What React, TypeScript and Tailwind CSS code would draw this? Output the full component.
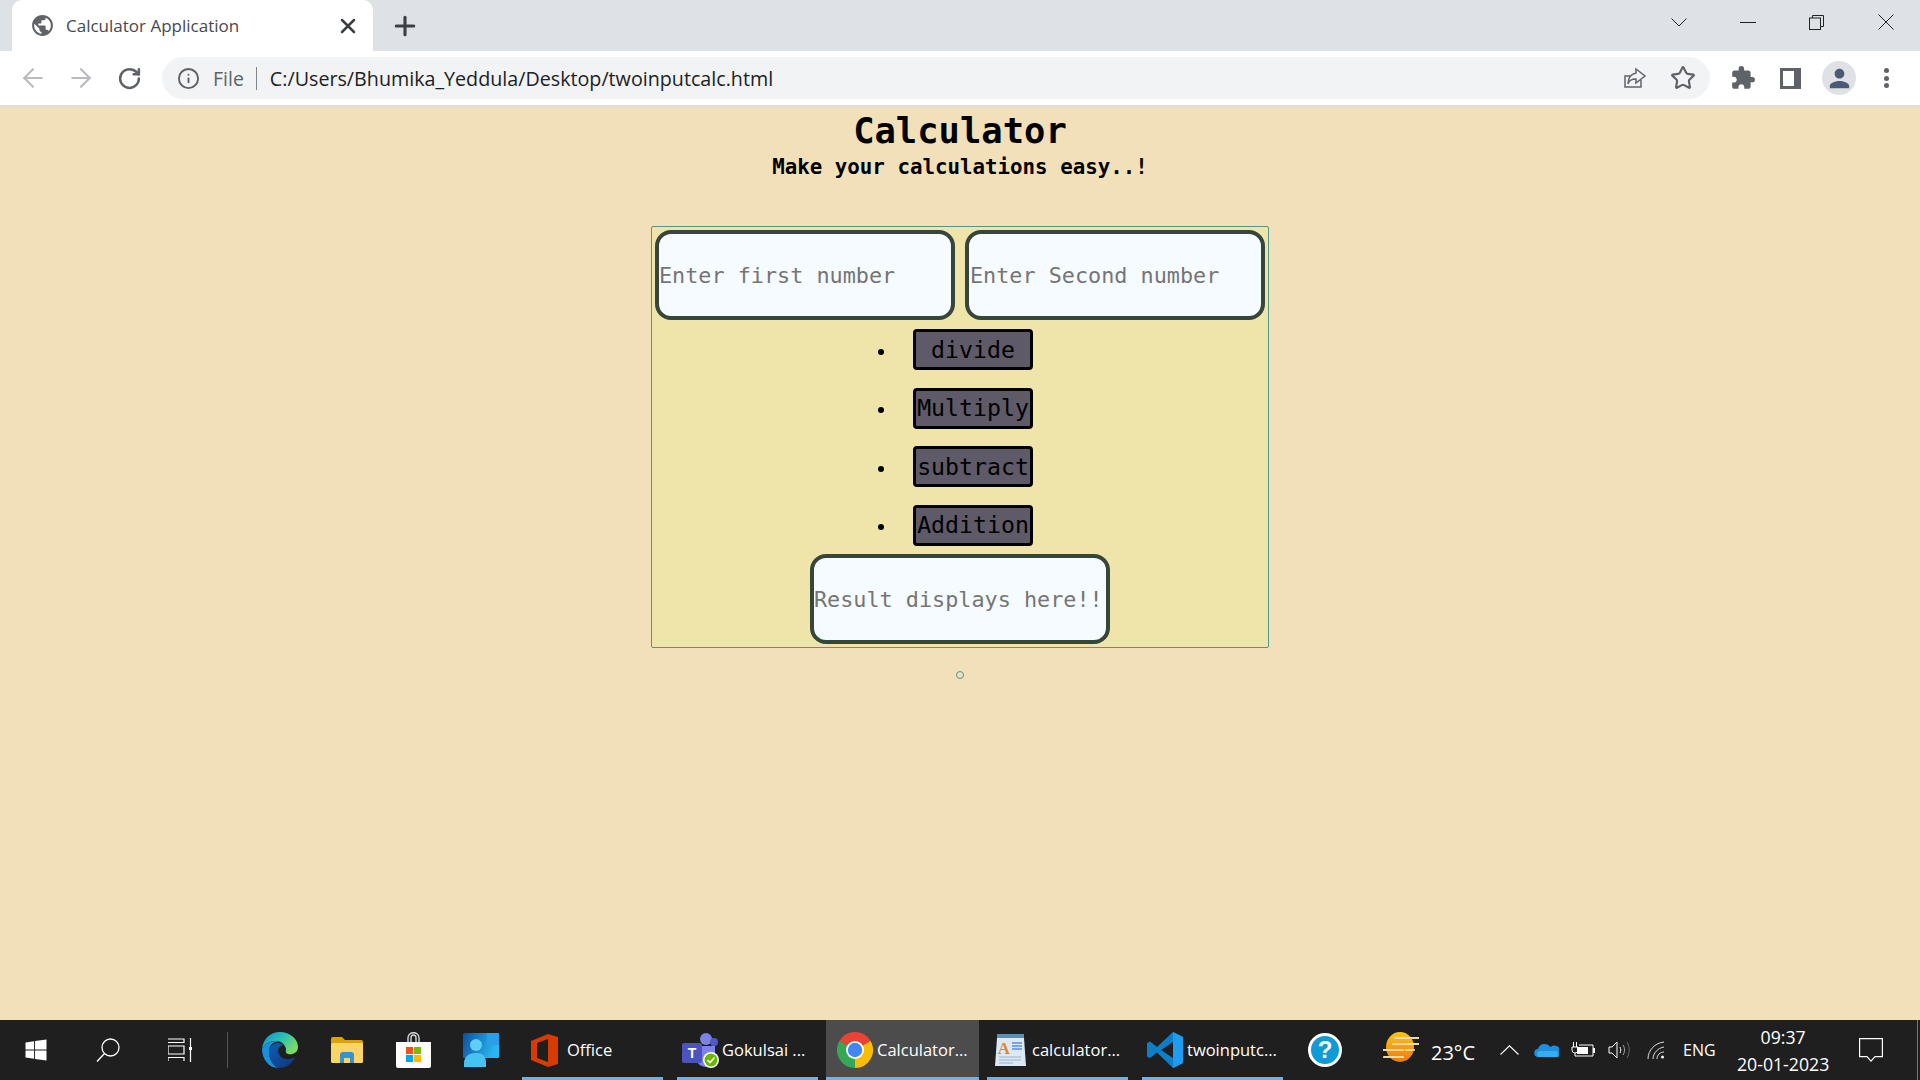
import { ArrowLeft, ArrowRight, RotateCw, Info, Star, Plus, X } from 'lucide-react'
import { FaWindows } from 'react-icons/fa'
import { MdPublic, MdPerson, MdExtension } from 'react-icons/md'

const mono = { fontFamily: '"DejaVu Sans Mono", monospace' }
const ui = { fontFamily: '"Open Sans", "Noto Sans", sans-serif' }

function Edge() {
  return (
    <svg viewBox="0 0 36 36" className="w-[36px] h-[36px]">
      <defs>
        <linearGradient id="edgeTop" x1="0" y1="0" x2="1" y2="0.6">
          <stop offset="0" stopColor="#0c8ccf" />
          <stop offset="0.55" stopColor="#2fc1b0" />
          <stop offset="1" stopColor="#7fdc62" />
        </linearGradient>
        <linearGradient id="edgeLow" x1="0" y1="0" x2="1" y2="1">
          <stop offset="0" stopColor="#0b5fb0" />
          <stop offset="1" stopColor="#13347d" />
        </linearGradient>
      </defs>
      <path d="M0 17C1 7 8 0 18 0c10 0 18 7 18 15 0 6-6 8-10 7-3-1-2-3-2-5-1-5-5-8-10-8-6 0-12 3-14 8z" fill="url(#edgeTop)" />
      <path d="M0 17c2-5 8-8 14-8 1 0 2 .2 3 .5-6 0-10 4-10 10 0 7 4 14 9 16.500C7 36 0 27 0 17z" fill="#1a8fdc" />
      <path d="M16 36c-5-2-9-9-9-16 0-5 4-9 9-9 3 0 5 1 5 2-4 1-6 5-4 9 2 5 9 7 16 3-3 7-9 11-17 11z" fill="url(#edgeLow)" />
    </svg>
  )
}

function Explorer() {
  return (
    <svg viewBox="0 0 32 26" className="w-[32px] h-[26px]">
      <path d="M0 2a2 2 0 0 1 2-2h9l3 3h16a2 2 0 0 1 2 2v3H0z" fill="#dca10c" />
      <rect x="0" y="6" width="32" height="20" rx="1.500" fill="#fbd667" />
      <path d="M9 26v-8a3 3 0 0 1 3-3h8a3 3 0 0 1 3 3v8h-4v-5h-6v5z" fill="#3d8fd0" />
    </svg>
  )
}

function Store() {
  return (
    <svg viewBox="0 0 35 36" className="w-[35px] h-[36px]">
      <path d="M12 11V6c0-7 11-7 11 0v5M15 11V6c0-4 5-4 5 0v5" fill="none" stroke="#d8d8d8" strokeWidth="1.400" />
      <path d="M0 10h35v24a2 2 0 0 1-2 2H2a2 2 0 0 1-2-2z" fill="#fff" />
      <rect x="10" y="15" width="7" height="7" fill="#f1511b" />
      <rect x="18" y="15" width="7" height="7" fill="#80b905" />
      <rect x="10" y="23" width="7" height="7" fill="#01a4ee" />
      <rect x="18" y="23" width="7" height="7" fill="#ffb900" />
    </svg>
  )
}

function People() {
  return (
    <svg viewBox="0 0 36 34" className="w-[36px] h-[34px]">
      <defs>
        <linearGradient id="peopleBox" x1="0" y1="0" x2="1" y2="0.3">
          <stop offset="0" stopColor="#0d4f9c" />
          <stop offset="1" stopColor="#29b6f2" />
        </linearGradient>
      </defs>
      <rect x="0" y="0" width="36" height="25" rx="1.500" fill="url(#peopleBox)" />
      <rect x="24" y="0" width="12" height="12" fill="#2a9fe8" />
      <circle cx="13" cy="12" r="6" fill="#5fd0f5" />
      <path d="M1 34v-4c0-6 5-10 11-10h2c6 0 9 4 9 10v4z" fill="#47c3f2" />
    </svg>
  )
}

function Office() {
  return (
    <svg viewBox="0 0 27 33" className="w-[27px] h-[33px]">
      <path fillRule="evenodd" d="M0 7L17 0l10 3v27l-10 3L0 26zM17 5L6 9v15l11 4z" fill="#d83b01" />
    </svg>
  )
}

function Teams() {
  return (
    <svg viewBox="0 0 37 35" className="w-[37px] h-[35px]">
      <circle cx="24" cy="6" r="6" fill="#7b83eb" />
      <circle cx="32" cy="9" r="4" fill="#5059c9" />
      <path d="M14 13h19v12c0 6-4 9-9 9s-10-4-10-9z" fill="#7b83eb" />
      <rect x="0" y="10" width="20" height="20" rx="2" fill="#4b53bc" />
      <text x="10" y="25" fontSize="14" fontWeight="700" textAnchor="middle" fill="#fff" fontFamily="Liberation Sans">T</text>
      <circle cx="29" cy="27" r="8" fill="#fff" />
      <circle cx="29" cy="27" r="6.500" fill="#6bb700" />
      <path d="M25.500 27l2.500 2.500 4.500-5" fill="none" stroke="#fff" strokeWidth="1.600" />
    </svg>
  )
}

function Chrome() {
  return (
    <svg viewBox="0 0 36 36" className="w-[36px] h-[36px]">
      <path d="M18 18L2.400 9A18 18 0 0 1 33.600 9z" fill="#ea4335" />
      <path d="M18 18L33.600 9A18 18 0 0 1 18 36z" fill="#fbbc04" />
      <path d="M18 18L18 36A18 18 0 0 1 2.400 9z" fill="#34a853" />
      <circle cx="18" cy="18" r="9" fill="#fff" />
      <circle cx="18" cy="18" r="7.200" fill="#4285f4" />
    </svg>
  )
}

function Notes() {
  return (
    <svg viewBox="0 0 31 33" className="w-[31px] h-[33px]">
      <rect x="2" y="0" width="27" height="5" fill="#5d8db0" />
      <path d="M2 4h27l2 28H0z" fill="#dce9f4" />
      <text x="9" y="20" fontSize="17" fontWeight="700" textAnchor="middle" fill="#e8852a" fontFamily="Liberation Serif">A</text>
      <path d="M17 9h10M17 12h10M17 15h10" stroke="#5b8fd6" strokeWidth="1.500" />
      <path d="M4 23h22M4 26h22M4 29h14" stroke="#9cb2c6" strokeWidth="1.200" />
    </svg>
  )
}

function VsCode() {
  return (
    <svg viewBox="0 0 36 36" className="w-[36px] h-[36px]">
      <path d="M26 0L36 5v26l-10 5-16-15.500-7 5.500-3-1.500V11l3-1.500 7 5.500z" fill="#0c7fcb" />
      <path d="M26 0L36 5v26l-10 5z" fill="#1f9cf0" />
      <path d="M26 10L14 18l12 8z" fill="#1f1f1f" />
    </svg>
  )
}

function Help() {
  return (
    <div className="w-[34px] h-[34px] rounded-full bg-[#0f9bd7] border-[3px] border-white flex items-center justify-center text-white text-[24px] font-bold" style={{ fontFamily: '"Liberation Sans", sans-serif' }}>
      ?
    </div>
  )
}

function Weather() {
  return (
    <svg viewBox="0 0 36 30" className="w-[36px] h-[30px]">
      <defs>
        <linearGradient id="sun" x1="0" y1="0" x2="0" y2="1">
          <stop offset="0" stopColor="#fcc419" />
          <stop offset="1" stopColor="#ee7a0c" />
        </linearGradient>
      </defs>
      <ellipse cx="17" cy="15" rx="14" ry="15" fill="url(#sun)" />
      <path d="M12 6h24M10 12h26M0 18h20M23 18h8M1 25h19" stroke="#ecd9a8" strokeWidth="2.200" strokeLinecap="round" />
    </svg>
  )
}

function TaskText({ children }: { children: React.ReactNode }) {
  return <span className="text-[16.500px] text-white leading-none whitespace-nowrap">{children}</span>
}

function Running({ w, ml, active, children }: { w: string; ml: string; active?: boolean; children: React.ReactNode }) {
  return (
    <div className={`${w} ${ml} ${active ? 'bg-[#4c4c4c]' : ''} h-full pt-[3px] flex items-center border-b-[3px] border-[#6cb2e8] shrink-0`}>
      {children}
    </div>
  )
}

function OpButton({ label }: { label: string }) {
  return (
    <li className="flex items-center gap-[29px]">
      <span className="w-[6px] h-[6px] rounded-full bg-black mt-[4px]" />
      <button className="w-[120px] h-[41px] bg-[#5f5a68] border-[3px] border-black rounded-[4px] text-[23.200px] text-black leading-none p-0 flex items-center justify-center" style={mono}>
        {label}
      </button>
    </li>
  )
}

export default function App() {
  return (
    <div className="w-[1920px] h-[1080px] flex flex-col overflow-hidden" style={ui}>
      {/* tab strip */}
      <div className="h-[51px] bg-[#dee1e6] flex items-end shrink-0">
        <div className="ml-[12px] w-[361px] h-[51px] bg-white rounded-t-[10px] flex items-center pl-[19px] pr-[13px] text-[#45494e]">
          <MdPublic className="w-[25px] h-[25px] text-[#5f6368] -ml-[1px]" />
          <span className="ml-[11px] text-[17px] leading-none">Calculator Application</span>
          <X className="ml-auto w-[24px] h-[24px] text-[#3c4043]" strokeWidth={2.500} />
        </div>
        <div className="ml-[17px] h-[51px] flex items-center">
          <Plus className="w-[30px] h-[30px] text-[#3c4043]" strokeWidth={2.500} />
        </div>
        <div className="ml-auto h-[44px] self-start flex items-center">
          <svg viewBox="0 0 16 9" className="w-[16px] h-[9px] mr-[53px]" fill="none" stroke="#222" strokeWidth="1">
            <path d="M.500.500L8 8l7.500-7.500" />
          </svg>
          <span className="w-[16px] h-[1px] bg-[#222] mr-[53px]" />
          <svg viewBox="0 0 15 15" className="w-[15px] h-[15px] mr-[54px]" fill="none" stroke="#222" strokeWidth="1">
            <rect x="0.500" y="3" width="11" height="11.500" />
            <path d="M3.500 3V0.500h11v11H11.500" />
          </svg>
          <svg viewBox="0 0 16 16" className="w-[16px] h-[16px] mr-[26px]" fill="none" stroke="#222" strokeWidth="1">
            <path d="M.500.500l15 15M15.500.500l-15 15" />
          </svg>
        </div>
      </div>

      {/* toolbar */}
      <div className="h-[56px] bg-white border-b-2 border-[#dfdfdf] flex items-start shrink-0">
        <div className="h-[54px] flex items-center pl-[18px]">
          <ArrowLeft className="w-[30px] h-[30px] text-[#b9bbbe]" strokeWidth={1.700} />
          <ArrowRight className="ml-[18px] w-[30px] h-[30px] text-[#b9bbbe]" strokeWidth={1.700} />
          <RotateCw className="ml-[20.500px] w-[25px] h-[25px] text-[#5f6368]" strokeWidth={2.400} />
        </div>
        <div className="mt-[6px] ml-[20.500px] w-[1548px] h-[42px] rounded-full bg-[#f1f3f4] flex items-center pl-[15px]">
          <Info className="w-[23px] h-[23px] text-[#5f6368]" strokeWidth={2} />
          <span className="ml-[13px] mt-[1px] text-[#5f6368] text-[19.500px] leading-none">File</span>
          <span className="ml-[12px] w-[1px] h-[23px] bg-[#80868b]" />
          <span className="ml-[13px] mt-[1px] text-[#202124] text-[19.700px] leading-none">C:/Users/Bhumika_Yeddula/Desktop/twoinputcalc.html</span>
          <svg viewBox="0 0 24 24" className="ml-auto w-[24px] h-[24px]" fill="none" stroke="#5f6368" strokeWidth="1.500">
            <path d="M18 14v7H2V10h5" />
            <path d="M13 3l9 7-9 7v-4c-4 0-7 1-8 5 0-6 3-10 8-11z" />
          </svg>
          <Star className="ml-[23px] mr-[14px] w-[26px] h-[26px] text-[#5f6368]" strokeWidth={2} />
        </div>
        <div className="h-[54px] flex items-center">
          <MdExtension className="ml-[20px] w-[26px] h-[26px] text-[#5f6368]" />
          <div className="ml-[24px] w-[21px] h-[21px] border-[3px] border-r-[7px] border-[#5f6368] bg-white" />
          <div className="ml-[21px] w-[34px] h-[34px] rounded-full bg-[#dfe1e5] flex items-center justify-center">
            <MdPerson className="w-[29px] h-[29px] text-[#4a5a75]" />
          </div>
          <div className="ml-[28px] flex flex-col gap-[2.500px]">
            <span className="w-[5px] h-[5px] rounded-full bg-[#5f6368]" />
            <span className="w-[5px] h-[5px] rounded-full bg-[#5f6368]" />
            <span className="w-[5px] h-[5px] rounded-full bg-[#5f6368]" />
          </div>
        </div>
      </div>

      {/* page */}
      <main className="flex-1 bg-[#f2e0ba] flex flex-col items-center" style={mono}>
        <h1 className="mt-[4px] text-[35.500px] leading-[40px] font-bold text-black">Calculator</h1>
        <p className="mt-[4px] text-[20.800px] leading-[24px] font-bold text-black">Make your calculations easy..!</p>

        <div className="mt-[47px] w-[618px] h-[422px] bg-[#efe4a9] border border-[#4f9a86] rounded-[2px] p-[3px] flex flex-col">
          <div className="flex gap-[10px]">
            <input placeholder="Enter first number" className="w-[300px] h-[90px] bg-[#f5fbff] border-4 border-[#36463a] rounded-[16px] text-[21.800px] pl-0 outline-none placeholder:text-[#757575]" style={mono} />
            <input placeholder="Enter Second number" className="w-[300px] h-[90px] bg-[#f5fbff] border-4 border-[#36463a] rounded-[16px] text-[21.800px] pl-[1px] outline-none placeholder:text-[#757575]" style={mono} />
          </div>
          <ul className="mt-[9px] pl-[223px] flex flex-col gap-[17.500px]">
            <OpButton label="divide" />
            <OpButton label="Multiply" />
            <OpButton label="subtract" />
            <OpButton label="Addition" />
          </ul>
          <input placeholder="Result displays here!!" className="mt-[8.500px] self-center w-[300px] h-[90px] bg-[#f5fbff] border-4 border-[#36463a] rounded-[16px] text-[21.800px] pl-0 outline-none placeholder:text-[#757575]" style={mono} />
        </div>

        <span className="mt-[23px] w-[8px] h-[8px] rounded-full border-[1.500px] border-[#4f9a86]" />
      </main>

      {/* taskbar */}
      <footer className="h-[60px] bg-[#1f1f1f] flex items-center shrink-0 text-white">
        <FaWindows className="ml-[24px] w-[24px] h-[24px] text-white shrink-0" />
        <svg viewBox="0 0 24 24" className="ml-[48px] w-[24px] h-[24px] shrink-0" fill="none" stroke="#fff" strokeWidth="1.300">
          <circle cx="14.500" cy="9.500" r="8.500" />
          <path d="M8.500 15.500L1 23.500" />
        </svg>
        <svg viewBox="0 0 24 24" className="ml-[48px] w-[24px] h-[24px] shrink-0" fill="none" stroke="#fff" strokeWidth="1.200">
          <path d="M0 1h16v3.500H0M0 8h16v8H0zM0 23v-3.500h16V23M22.500 0v24" />
          <rect x="21" y="9" width="3" height="3" fill="#fff" stroke="none" />
        </svg>
        <span className="ml-[35px] w-[1px] h-[36px] bg-[#555] shrink-0" />
        <div className="ml-[34px] shrink-0 flex"><Edge /></div>
        <div className="ml-[33px] shrink-0 flex"><Explorer /></div>
        <div className="ml-[33px] shrink-0 flex"><Store /></div>
        <div className="ml-[32px] shrink-0 flex"><People /></div>
        <Running w="w-[141px]" ml="ml-[23px]">
          <span className="ml-[9px] flex"><Office /></span>
          <span className="ml-[9px]"><TaskText>Office</TaskText></span>
        </Running>
        <Running w="w-[141px]" ml="ml-[14px]">
          <span className="ml-[5px] flex"><Teams /></span>
          <span className="ml-[3px]"><TaskText>Gokulsai ...</TaskText></span>
        </Running>
        <Running w="w-[153px]" ml="ml-[8px]" active>
          <span className="ml-[11px] flex"><Chrome /></span>
          <span className="ml-[4px]"><TaskText>Calculator...</TaskText></span>
        </Running>
        <Running w="w-[141px]" ml="ml-[8px]">
          <span className="ml-[8px] flex"><Notes /></span>
          <span className="ml-[6px]"><TaskText>calculator...</TaskText></span>
        </Running>
        <Running w="w-[141px]" ml="ml-[14px]">
          <span className="ml-[5px] flex"><VsCode /></span>
          <span className="ml-[4px]"><TaskText>twoinputc...</TaskText></span>
        </Running>
        <div className="ml-[25px] shrink-0"><Help /></div>
        <div className="ml-[41px] shrink-0 flex -mt-[6px]"><Weather /></div>
        <span className="ml-[12px] text-[20px] leading-none mt-[6px] whitespace-nowrap">23°C</span>
        <svg viewBox="0 0 19 10" className="ml-[25px] w-[19px] h-[10px] shrink-0" fill="none" stroke="#fff" strokeWidth="1.100">
          <path d="M.500 9.500L9.500.800l9 8.700" />
        </svg>
        <svg viewBox="0 0 24 16" className="ml-[15px] w-[25px] h-[16px] shrink-0">
          <path d="M4 15a4 4 0 0 1-.500-8A7 7 0 0 1 16 5a5 5 0 0 1 8 10z" fill="#1e8fe0" />
          <path d="M4 15a4 4 0 0 1 0-6h18a4 4 0 0 1 0 6z" fill="#35aef0" />
        </svg>
        <svg viewBox="0 0 24 16" className="ml-[12px] w-[24px] h-[16px] shrink-0" fill="none" stroke="#fff" strokeWidth="1">
          <path d="M1 5h6v3a3 3 0 0 1-6 0zM2.500 0v5M5.500 0v5M4 11v3h18V3H8" />
          <rect x="6" y="5" width="11" height="7" fill="#fff" stroke="none" />
          <rect x="22" y="6" width="2" height="5" fill="#fff" stroke="none" />
        </svg>
        <svg viewBox="0 0 22 18" className="ml-[13px] w-[22px] h-[18px] shrink-0" fill="none" stroke="#fff" strokeWidth="1">
          <path d="M1 6h3l5-5v16l-5-5H1zM12 6c1 2 1 4 0 6" />
          <path d="M15 4c2 3 2 7 0 10" stroke="#aaa" />
          <path d="M19 1c3 5 3 11 0 16" stroke="#666" />
        </svg>
        <svg viewBox="0 0 18 18" className="ml-[17px] w-[18px] h-[18px] shrink-0" fill="none" stroke="#ddd" strokeWidth="1">
          <path d="M1 18C1 9 8 2 17 1M6 18c0-6 5-11 11-12M10 18c0-4 3-7 7-7" />
          <circle cx="15.500" cy="16" r="1.500" fill="#fff" stroke="none" />
        </svg>
        <span className="ml-[18px] text-[16px] leading-none">ENG</span>
        <div className="ml-[21px] w-[93px] flex flex-col items-center gap-[9px] text-[17.700px] leading-[18px]">
          <span>09:37</span>
          <span className="whitespace-nowrap">20-01-2023</span>
        </div>
        <svg viewBox="0 0 24 24" className="ml-[29px] w-[24px] h-[24px] shrink-0" fill="none" stroke="#fff" strokeWidth="1.200">
          <path d="M.600.600h22.800v18H16l-4 4.500-4-4.500H.600z" />
        </svg>
        <span className="ml-[34px] w-[1px] h-full bg-[#777] shrink-0" />
      </footer>
    </div>
  )
}
